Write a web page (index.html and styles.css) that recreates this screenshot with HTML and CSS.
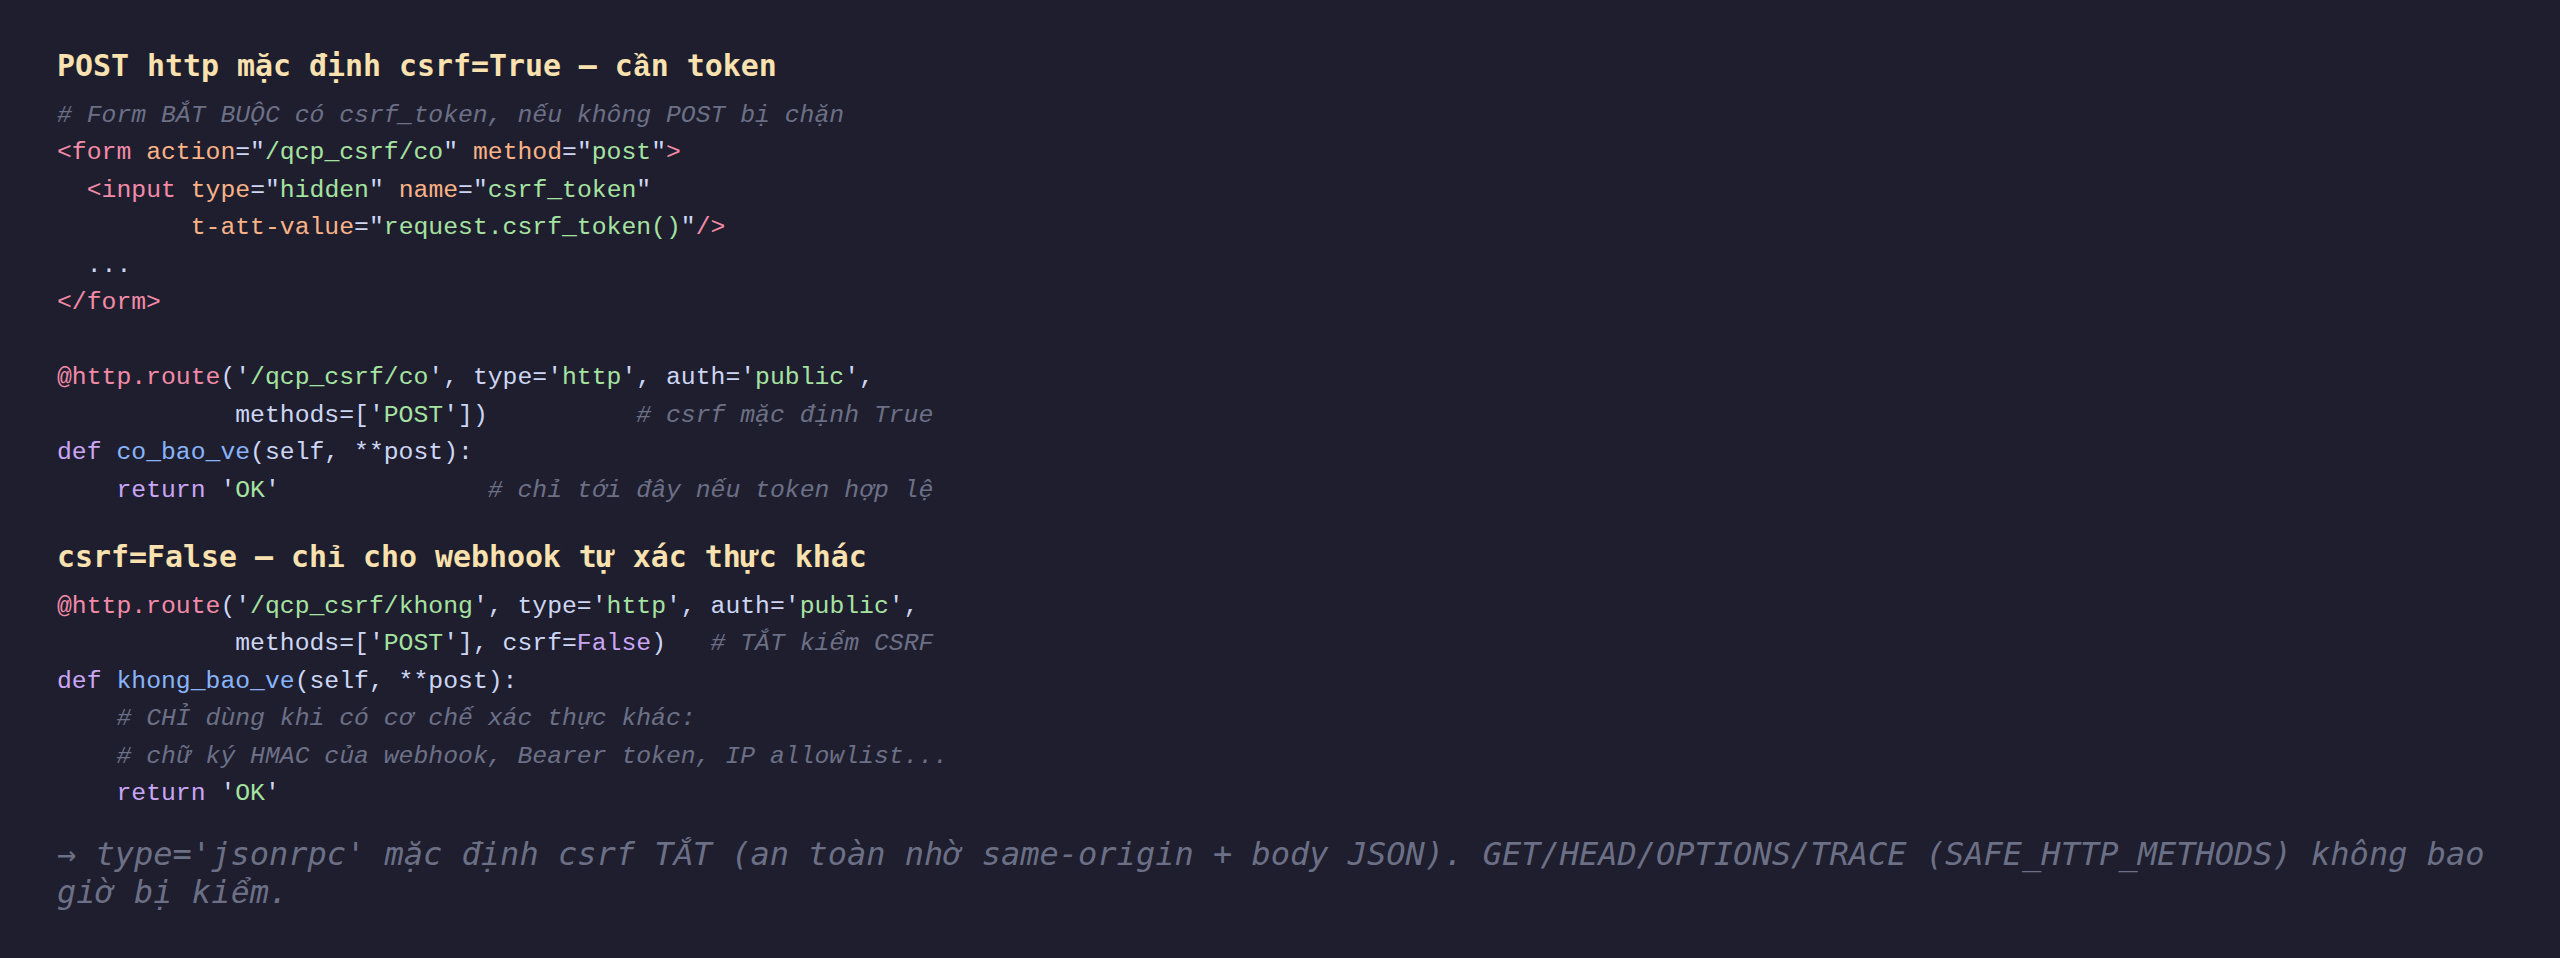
FILE: index.html
```html
<!DOCTYPE html>
<html lang="vi">
<head>
<meta charset="utf-8">
<title>CSRF</title>
<link rel="stylesheet" href="styles.css">
</head>
<body>
<main class="page">
<h2 class="title">POST http mặc định csrf=True — c<span class="vi">ầ</span>n token</h2>
<pre class="code"><span class="c"># Form BẮT BUỘC có csrf_token, nếu không POST bị chặn</span>
<span class="t">&lt;form</span> <span class="a">action</span>="<span class="s">/qcp_csrf/co</span>" <span class="a">method</span>="<span class="s">post</span>"<span class="t">&gt;</span>
  <span class="t">&lt;input</span> <span class="a">type</span>="<span class="s">hidden</span>" <span class="a">name</span>="<span class="s">csrf_token</span>"
         <span class="a">t-att-value</span>="<span class="s">request.csrf_token()</span>"<span class="t">/&gt;</span>
  ...
<span class="t">&lt;/form&gt;</span>

<span class="d">@http.route</span>('<span class="s">/qcp_csrf/co</span>', type='<span class="s">http</span>', auth='<span class="s">public</span>',
            methods=['<span class="s">POST</span>'])          <span class="c"># csrf mặc định True</span>
<span class="k">def</span> <span class="f">co_bao_ve</span>(self, **post):
    <span class="k">return</span> '<span class="s">OK</span>'              <span class="c"># chỉ tới đây nếu token hợp lệ</span></pre>
<h2 class="title">csrf=False — ch<span class="vi">ỉ</span> cho webhook tự xác thực khác</h2>
<pre class="code"><span class="d">@http.route</span>('<span class="s">/qcp_csrf/khong</span>', type='<span class="s">http</span>', auth='<span class="s">public</span>',
            methods=['<span class="s">POST</span>'], csrf=<span class="k">False</span>)   <span class="c"># TẮT kiểm CSRF</span>
<span class="k">def</span> <span class="f">khong_bao_ve</span>(self, **post):
    <span class="c"># CHỈ dùng khi có cơ chế xác thực khác:</span>
    <span class="c"># chữ ký HMAC của webhook, Bearer token, IP allowlist...</span>
    <span class="k">return</span> '<span class="s">OK</span>'</pre>
<p class="note">→ type='jsonrpc' mặc định csrf T<span class="vi">Ắ</span>T (an toàn nhờ same-origin + body JSON). GET/HEAD/OPTIONS/TRACE (SAFE_HTTP_METHODS) không bao giờ bị ki<span class="vi">ể</span>m.</p>
</main>
</body>
</html>
```
FILE: styles.css
```css
html, body {
  margin: 0;
  padding: 0;
  background: #1e1e2e;
}
body {
  min-height: 958px;
}
.page {
  padding: 48px 57px 40px 57px;
  display: flex;
  flex-direction: column;
}
.title {
  margin: 0 0 13.5px 0;
  font-family: "DejaVu Sans Mono", monospace;
  font-weight: bold;
  font-size: 29.9px;
  line-height: 35px;
  color: #f9e2af;
}
.code {
  margin: 0 0 30px 0;
  font-family: "Liberation Mono", monospace;
  font-size: 24.75px;
  line-height: 37.5px;
  color: #cdd6f4;
  white-space: pre;
}
.vi {
  font-family: "Liberation Mono", monospace;
  font-size: 1.003em;
  line-height: 0;
}
.c { color: #6c7086; font-style: italic; }
.t { color: #f38ba8; }
.a { color: #fab387; }
.s { color: #a6e3a1; }
.d { color: #f38ba8; }
.k { color: #cba6f7; }
.f { color: #89b4fa; }
.note {
  margin: -8px 0 0 0;
  font-family: "DejaVu Sans Mono", monospace;
  font-style: italic;
  font-size: 32px;
  line-height: 38.3px;
  color: #6c7086;
}
```
